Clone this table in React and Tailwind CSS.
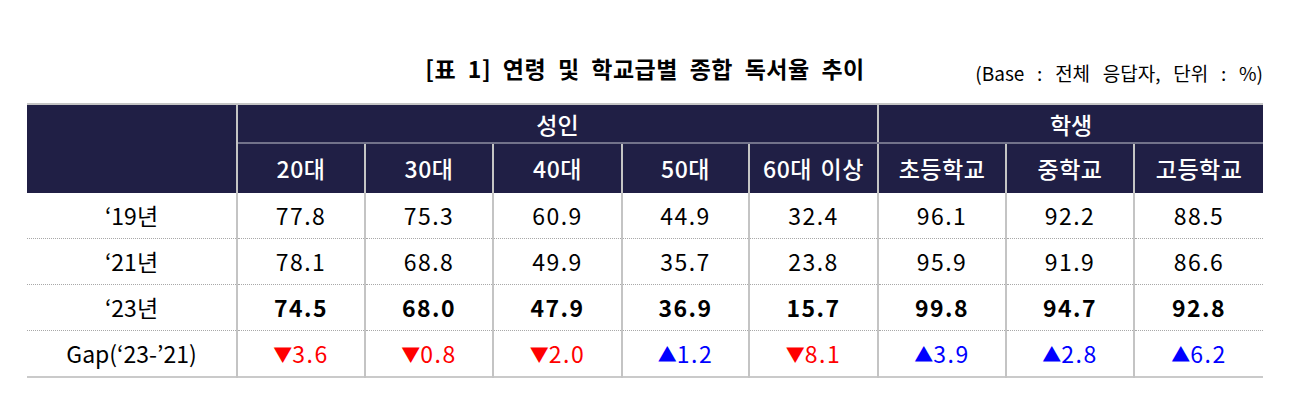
import React from "react";

const cols = ["20대", "30대", "40대", "50대", "60대 이상", "초등학교", "중학교", "고등학교"];
const widths = [210, 128, 128, 129, 127, 129, 128, 128, 129];
const rows = [
  { label: "‘19년", vals: ["77.8", "75.3", "60.9", "44.9", "32.4", "96.1", "92.2", "88.5"], bold: false },
  { label: "‘21년", vals: ["78.1", "68.8", "49.9", "35.7", "23.8", "95.9", "91.9", "86.6"], bold: false },
  { label: "‘23년", vals: ["74.5", "68.0", "47.9", "36.9", "15.7", "99.8", "94.7", "92.8"], bold: true },
];
const gaps = [
  ["down", "3.6"], ["down", "0.8"], ["down", "2.0"], ["up", "1.2"],
  ["down", "8.1"], ["up", "3.9"], ["up", "2.8"], ["up", "6.2"],
];

export default function App() {
  return (
    <div
      className="w-[1293px] h-[406px] bg-white pl-[27px] pt-[44px] text-black"
      style={{ fontFamily: '"Noto Sans CJK KR", "Noto Sans", sans-serif' }}
    >
      <div className="w-[1236px]">
        <div className="grid grid-cols-[1fr_auto_1fr] items-start h-[59px]">
          <div />
          <div className="mt-[9px] text-[23px] font-bold leading-[30px] tracking-[0.5px] [word-spacing:6px]">
            [표 1] 연령 및 학교급별 종합 독서율 추이
          </div>
          <div className="justify-self-end mt-[16px] text-[19px] leading-[26px] [word-spacing:8.5px]">
            (Base : 전체 응답자, 단위 : %)
          </div>
        </div>
        <table className="table-fixed border-collapse w-[1236px]">
          <colgroup>
            {widths.map((w, i) => (
              <col key={i} style={{ width: w }} />
            ))}
          </colgroup>
          <thead>
            <tr className="h-[38px] bg-[#201f45] text-white border-t-2 border-[#c4c4c4]">
              <th rowSpan={2} className="bg-[#201f45] border-r-2 border-r-[#c4c4c4]" />
              <th colSpan={5} className="text-[23px] font-medium border-r-2 border-r-[#c4c4c4] border-b-2 border-b-[#72728a] pt-[2px]">
                성인
              </th>
              <th colSpan={3} className="text-[23px] font-medium border-b-2 border-b-[#72728a] pt-[2px]">
                학생
              </th>
            </tr>
            <tr className="h-[50px] bg-[#201f45] text-white">
              {cols.map((c, i) => (
                <th
                  key={c}
                  className={`text-[23px] font-medium whitespace-nowrap tracking-[0.5px] [word-spacing:3px] ${i < 7 ? "border-r-2 border-r-[#c4c4c4]" : ""}`}
                >
                  {c}
                </th>
              ))}
            </tr>
          </thead>
          <tbody>
            {rows.map((r) => (
              <tr key={r.label} className="h-[46px] border-b border-dotted border-b-[#a8a8a8]">
                <td className="text-center text-[23px] border-r-2 border-r-[#c4c4c4]">{r.label}</td>
                {r.vals.map((v, i) => (
                  <td
                    key={i}
                    className={`text-center text-[23px] tracking-[1.5px] ${r.bold ? "font-bold" : ""} ${i < 7 ? "border-r-2 border-r-[#c4c4c4]" : ""}`}
                  >
                    {v}
                  </td>
                ))}
              </tr>
            ))}
            <tr className="h-[46px] border-b-2 border-b-[#cacaca]">
              <td className="text-center text-[23px] border-r-2 border-r-[#c4c4c4]">Gap(‘23-’21)</td>
              {gaps.map(([d, v], i) => (
                <td
                  key={i}
                  className={`text-center text-[23px] tracking-[1.5px] ${d === "up" ? "text-[#0000ff]" : "text-[#ff0000]"} ${i < 7 ? "border-r-2 border-r-[#c4c4c4]" : ""}`}
                >
                  <span className="text-[19px] tracking-normal relative top-[-1px]">{d === "up" ? "▲" : "▼"}</span>
                  {v}
                </td>
              ))}
            </tr>
          </tbody>
        </table>
      </div>
    </div>
  );
}
